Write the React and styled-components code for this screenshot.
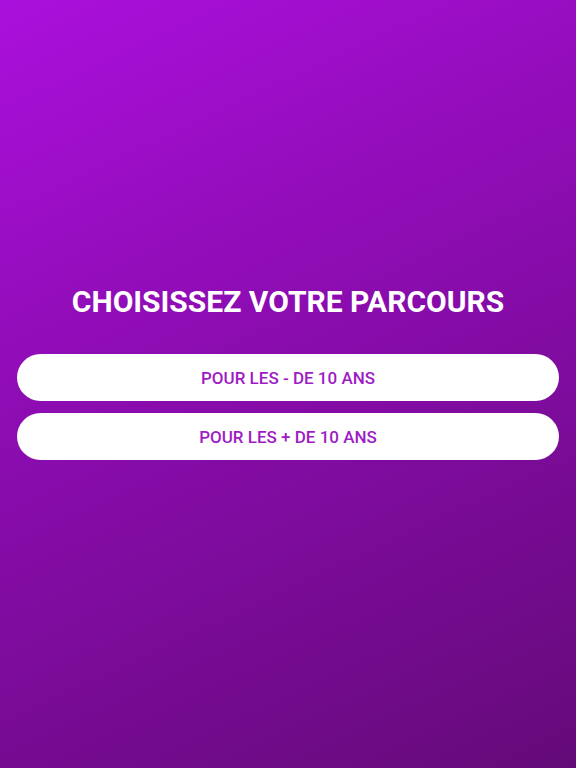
import React from "react";
import styled, { createGlobalStyle } from "styled-components";

const GlobalStyle = createGlobalStyle`
  html, body {
    margin: 0;
    padding: 0;
  }
  body {
    font-family: Roboto, "Liberation Sans", sans-serif;
  }
`;

const Screen = styled.div`
  width: 100%;
  min-height: 100vh;
  box-sizing: border-box;
  background: linear-gradient(155deg, #ab10dc 0%, #8a0cae 45%, #640a78 100%);
  display: flex;
  flex-direction: column;
  justify-content: center;
  padding: 0 17px 24px 17px;
`;

const Title = styled.h1`
  margin: 0 0 34px 0;
  color: #ffffff;
  font-size: 30px;
  font-weight: 700;
  text-align: center;
  line-height: 36px;
`;

const Choices = styled.div`
  display: flex;
  flex-direction: column;
  gap: 12px;
`;

const ChoiceButton = styled.button`
  height: 47px;
  border: none;
  border-radius: 24px;
  background: #ffffff;
  color: #9e1cc4;
  font-family: Roboto, "Liberation Sans", sans-serif;
  font-size: 17px;
  font-weight: 500;
  cursor: pointer;
`;

export default function App() {
  return (
    <>
      <GlobalStyle />
      <Screen>
        <Title>CHOISISSEZ VOTRE PARCOURS</Title>
        <Choices>
          <ChoiceButton>POUR LES - DE 10 ANS</ChoiceButton>
          <ChoiceButton>POUR LES + DE 10 ANS</ChoiceButton>
        </Choices>
      </Screen>
    </>
  );
}
